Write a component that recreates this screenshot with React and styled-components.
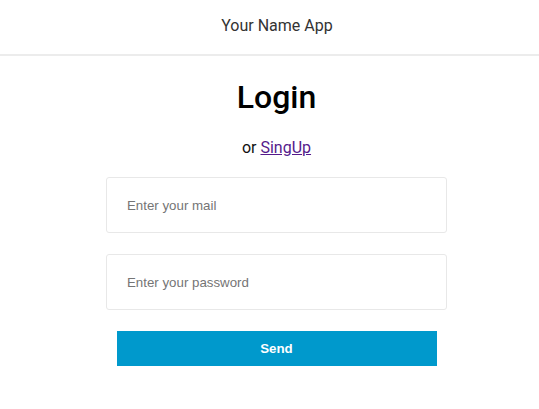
import React from 'react';
import styled, { createGlobalStyle } from 'styled-components';

const GlobalStyle = createGlobalStyle`
  body {
    margin: 0;
    background: #fff;
    font-family: Roboto, "Liberation Sans", sans-serif;
    overflow: hidden;
  }
`;

const Header = styled.header`
  box-sizing: border-box;
  height: 56px;
  padding: 0 0 4px 15px;
  display: flex;
  align-items: center;
  justify-content: center;
  border-bottom: 2px solid #ececec;
  font-size: 16px;
  color: #333;
`;

const Main = styled.main`
  padding-left: 14px;
  display: flex;
  flex-direction: column;
  align-items: center;
`;

const Title = styled.h1`
  margin: 22px 0 0;
  font-size: 32px;
  font-weight: 500;
  line-height: 38px;
  color: #000;
`;

const Sub = styled.p`
  margin: 22px 0 0;
  font-size: 16px;
  line-height: 19px;
  color: #111;

  a {
    color: #551a8b;
    text-decoration: underline;
  }
`;

const Form = styled.form`
  margin-top: 20px;
  width: 341px;
  display: flex;
  flex-direction: column;
  align-items: center;
  gap: 21px;
`;

const Input = styled.input`
  box-sizing: border-box;
  width: 100%;
  height: 56px;
  border: 1px solid #e8e8e8;
  border-radius: 3px;
  padding: 0 20px;
  font-family: "Liberation Sans", Arial, sans-serif;
  font-size: 13.3px;
  outline: none;

  &::placeholder {
    color: #757575;
  }
`;

const Button = styled.button`
  width: 320px;
  height: 35px;
  border: none;
  background: #0099cc;
  color: #fff;
  font-family: "Liberation Sans", Arial, sans-serif;
  font-size: 13.3px;
  font-weight: 700;
`;

export default function App() {
  return (
    <>
      <GlobalStyle />
      <Header>Your Name App</Header>
      <Main>
        <Title>Login</Title>
        <Sub>
          or <a href="#signup">SingUp</a>
        </Sub>
        <Form onSubmit={e => e.preventDefault()}>
          <Input type="email" placeholder="Enter your mail" />
          <Input type="password" placeholder="Enter your password" />
          <Button type="submit">Send</Button>
        </Form>
      </Main>
    </>
  );
}
